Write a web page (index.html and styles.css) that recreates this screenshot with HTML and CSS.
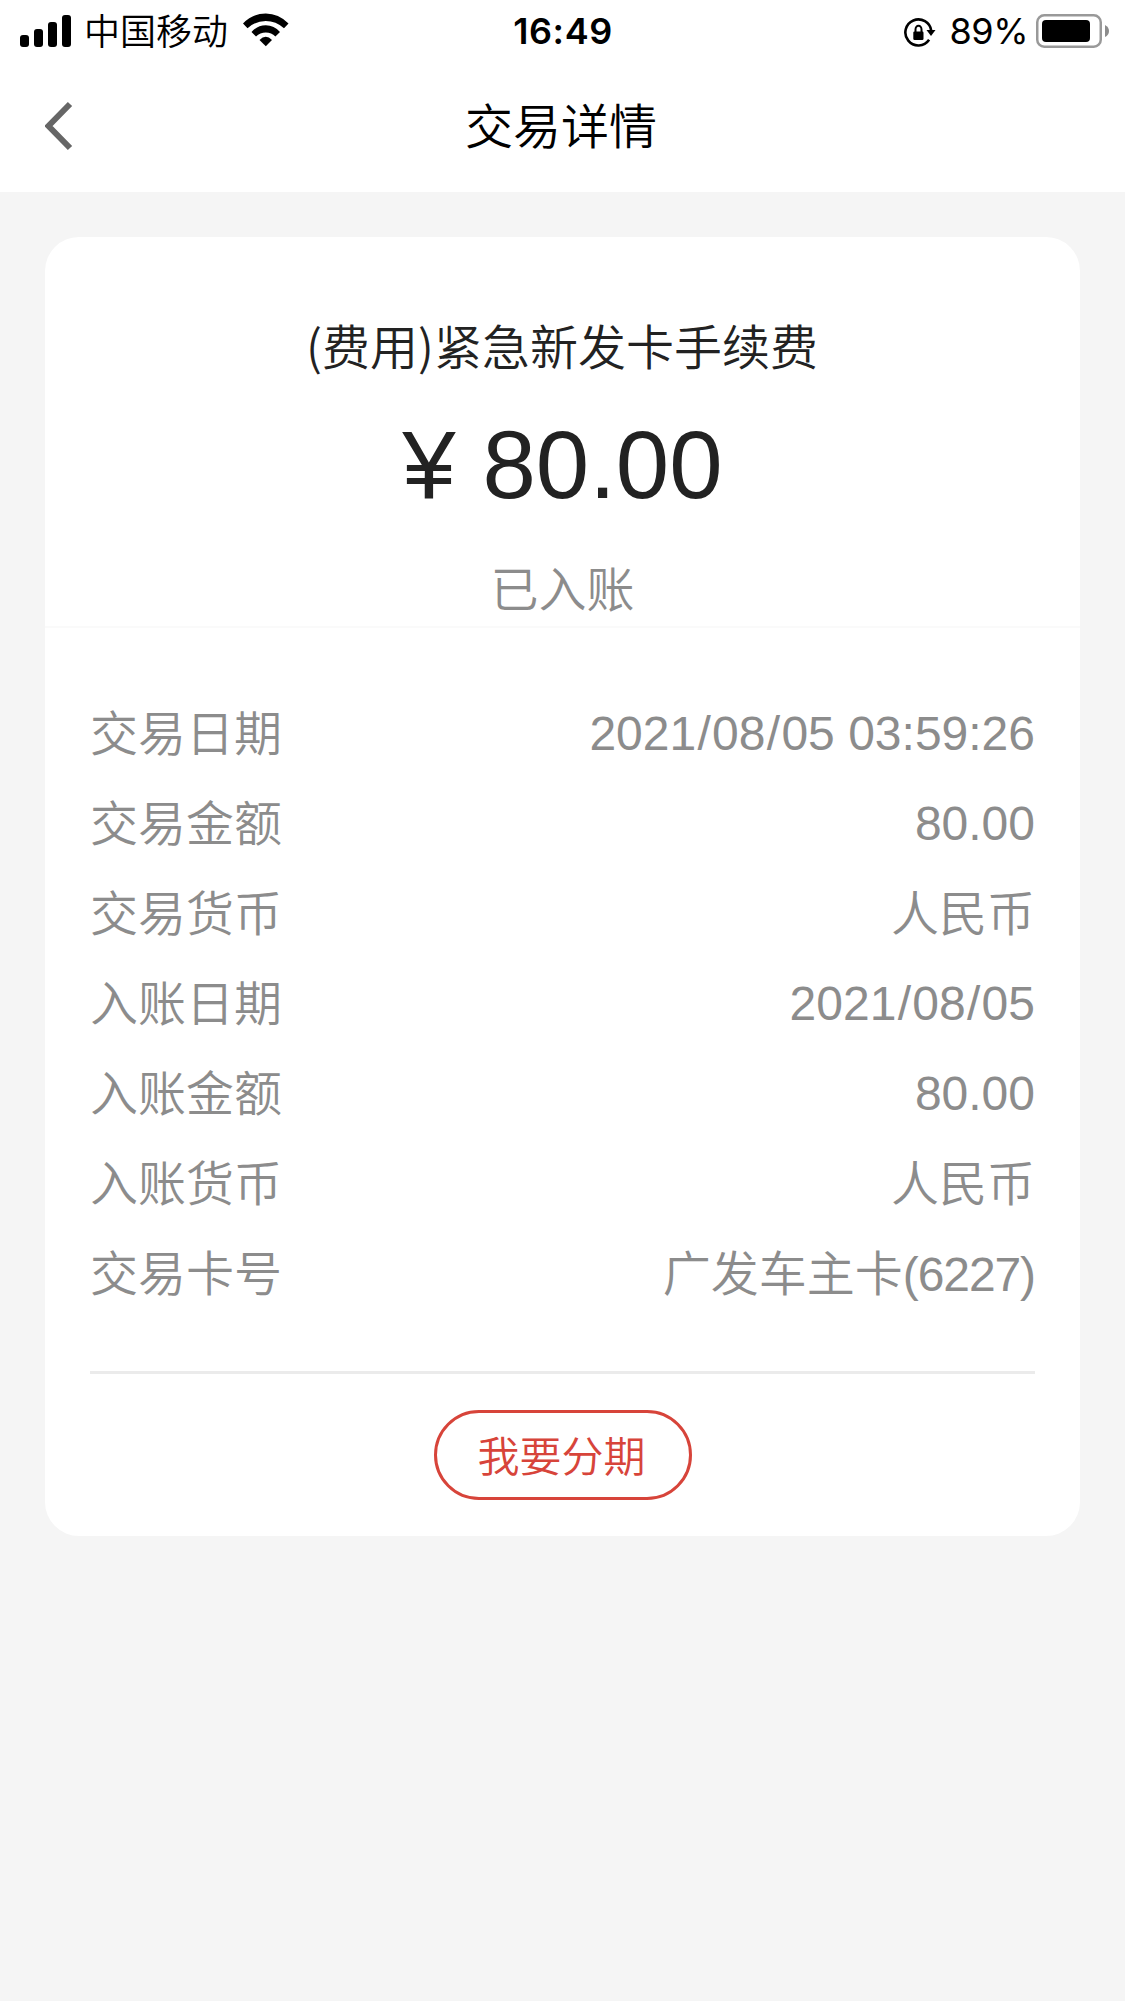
FILE: index.html
```html
<!DOCTYPE html>
<html lang="zh-CN">
<head>
<meta charset="utf-8">
<title>交易详情</title>
<link rel="stylesheet" href="styles.css">
</head>
<body>
<header class="top">
  <div class="status">
    <div class="status-left">
      <svg class="signal" width="51" height="32" viewBox="0 0 51 32"><rect x="0" y="20" width="9" height="12" rx="3"/><rect x="14" y="14" width="9" height="18" rx="3"/><rect x="28" y="7" width="9" height="25" rx="3"/><rect x="42" y="0" width="9" height="32" rx="3"/></svg>
      <span class="carrier">中国移动</span>
      <svg class="wifi" width="46" height="34" viewBox="0 0 46 34"><path d="M0 10.500Q10 .5 22.800.5T45.500 10.500L41 15.200Q33 7.900 22.800 7.900T4.500 15.200Z"/><path d="M8.500 19Q14.500 12.300 22.800 12.300T37 19L32.400 23.500Q28.500 19.400 22.800 19.400T13 23.500Z"/><path d="M16.500 27Q22.800 20.700 29 27L22.800 33.200Z"/></svg>
    </div>
    <time class="clock">16:49</time>
    <div class="status-right">
      <svg class="lock" width="32" height="30" viewBox="0 0 32 30"><path class="ring" d="M27.300 13A13 13 0 1 0 25.100 21.800"/><path d="M22.500 12H31.500L27 18Z"/><rect x="9.300" y="13.500" width="10.200" height="8.500" rx="1.200"/><path class="shackle" d="M11.500 14V11.500a3 3.800 0 0 1 6 0V14"/></svg>
      <span class="percent">89%</span>
      <svg class="battery" width="74" height="34" viewBox="0 0 74 34"><rect class="case" x="1.250" y="1.250" width="63.500" height="31.500" rx="7"/><rect x="6" y="6" width="48" height="22" rx="4"/><path class="cap" d="M69 11Q73 13 73 17T69 23Z"/></svg>
    </div>
  </div>
  <nav class="nav">
    <svg class="back" width="28" height="50" viewBox="0 0 28 50"><path d="M25 3L3.500 25L25 47"/></svg>
    <h1 class="title">交易详情</h1>
  </nav>
</header>
<main class="card">
  <section class="summary">
    <p class="name">(费用)紧急新发卡手续费</p>
    <p class="amount">¥ 80.00</p>
    <p class="state">已入账</p>
  </section>
  <dl class="details">
    <div class="row"><dt>交易日期</dt><dd class="num">2021<span class="slash">/</span>08<span class="slash">/</span>05 03:59:26</dd></div>
    <div class="row"><dt>交易金额</dt><dd class="num">80.00</dd></div>
    <div class="row"><dt>交易货币</dt><dd>人民币</dd></div>
    <div class="row"><dt>入账日期</dt><dd class="num">2021<span class="slash">/</span>08<span class="slash">/</span>05</dd></div>
    <div class="row"><dt>入账金额</dt><dd class="num">80.00</dd></div>
    <div class="row"><dt>入账货币</dt><dd>人民币</dd></div>
    <div class="row"><dt>交易卡号</dt><dd>广发车主卡<span class="tail">(6227)</span></dd></div>
  </dl>
  <footer class="action"><button class="split" type="button">我要分期</button></footer>
</main>
</body>
</html>
```
FILE: styles.css
```css
* { box-sizing: border-box; margin: 0; padding: 0; }

body {
  min-height: 2001px;
  background: #f5f5f5;
  color: #222;
  font-family: "Liberation Sans", "Noto Sans CJK SC", sans-serif;
  font-size: 48px;
  font-weight: 350;
}

svg { display: block; flex: none; }

.top { height: 192px; background: #fff; color: #000; }

.status {
  display: grid;
  grid-template-columns: 1fr auto 1fr;
  align-items: center;
  height: 60px;
  padding: 0 15px 0 20px;
  font-family: Inter, "Noto Sans CJK SC", sans-serif;
  font-size: 36px;
  line-height: 60px;
}
.status-left, .status-right { display: flex; align-items: center; }
.status-right { justify-content: flex-end; }
.carrier { margin: 2px 15px 0 13px; }
.wifi { margin-bottom: 2px; }
.clock { margin: 0 4px 0 0; font-size: 36px; font-weight: 600; letter-spacing: 0.6px; }
.lock { margin-top: 3px; }
.lock .ring { fill: none; stroke: #000; stroke-width: 2.6; }
.lock .shackle { fill: none; stroke: #000; stroke-width: 2; }
.percent { margin: 0 8px 0 14px; font-size: 36px; font-weight: 400; letter-spacing: -0.5px; }
.battery .case { fill: none; stroke: #999; stroke-width: 2.5; }
.battery .cap { fill: #8c8c8c; }

.nav {
  display: grid;
  grid-template-columns: 28px 1fr 28px;
  align-items: center;
  height: 132px;
  padding: 0 45px;
}
.back { fill: none; stroke: #666; stroke-width: 6; margin-bottom: 1px; }
.title { padding: 4px 3px 0 0; text-align: center; font-size: 48px; font-weight: 350; line-height: 72px; }

.card { margin: 45px; height: 1299px; border-radius: 34px; background: #fff; }

.summary {
  height: 391px;
  padding-top: 71px;
  border-bottom: 2px solid #fafafa;
  text-align: center;
}
.name { padding-right: 1px; font-family: "Noto Sans CJK SC", sans-serif; line-height: 72px; }
.amount { margin-top: 25px; font-size: 96px; line-height: 120px; }
.state { margin-top: 30px; line-height: 72px; color: #8c8c8c; }

.details {
  height: 746px;
  margin: 0 45px;
  padding-top: 62px;
  border-bottom: 3px solid #ebebeb;
  color: #8c8c8c;
}
.row { display: flex; justify-content: space-between; height: 90px; line-height: 90px; }
.num { margin-top: -1px; }
.slash { margin: 0 1.3px; }
.tail { letter-spacing: -1.1px; }

.action { display: flex; justify-content: center; padding-top: 36px; }
.split {
  width: 258px;
  height: 90px;
  padding: 0 2px 2px 0;
  border: 3px solid #d7443a;
  border-radius: 45px;
  background: #fff;
  color: #d7443a;
  font-family: "Noto Sans CJK SC", sans-serif;
  font-size: 42px;
  font-weight: 350;
  line-height: 82px;
}
```
